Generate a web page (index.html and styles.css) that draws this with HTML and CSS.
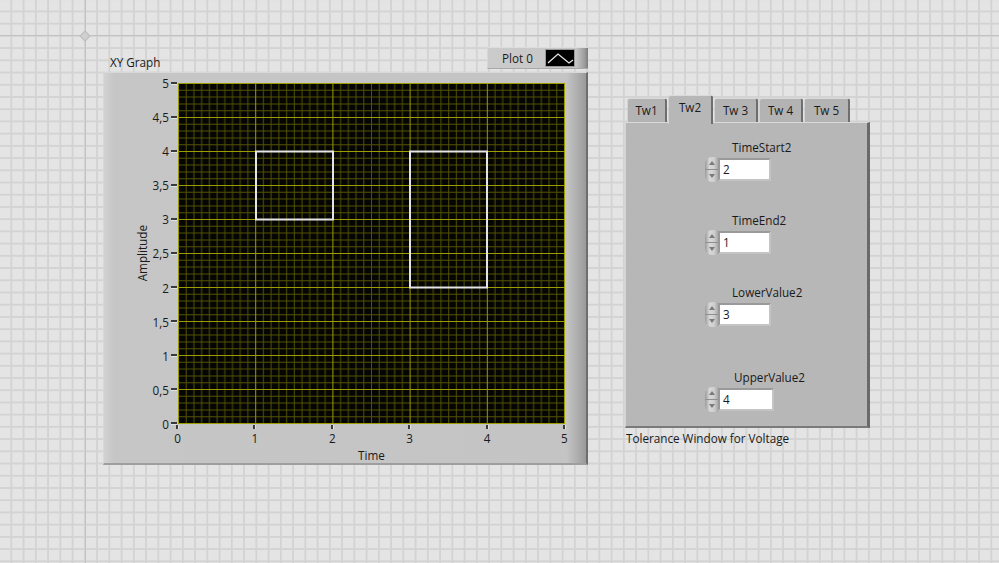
FILE: index.html
```html
<!DOCTYPE html>
<html lang="en">
<head>
<meta charset="utf-8">
<title>Front Panel</title>
<link rel="stylesheet" href="styles.css">
</head>
<body>
<div class="origin"></div>
<main class="front">
  <section class="graph">
    <div class="graph-head">
      <span class="caption graph-caption">XY Graph</span>
      <div class="legend">
        <span class="legend-name">Plot 0</span>
        <span class="legend-swatch">
          <svg width="28" height="16" viewBox="0 0 28 16"><polyline points="2,13 12,4 23,13 27,10" fill="none" stroke="#e8e8e8" stroke-width="1.3"/></svg>
        </span>
      </div>
    </div>
    <div class="frame">
      <div class="yaxis">
        <div class="ytitle">Amplitude</div>
        <div class="yticks">
          <div class="ytick"><span>5</span><i></i></div>
          <div class="ytick"><span>4,5</span><i></i></div>
          <div class="ytick"><span>4</span><i></i></div>
          <div class="ytick"><span>3,5</span><i></i></div>
          <div class="ytick"><span>3</span><i></i></div>
          <div class="ytick"><span>2,5</span><i></i></div>
          <div class="ytick"><span>2</span><i></i></div>
          <div class="ytick"><span>1,5</span><i></i></div>
          <div class="ytick"><span>1</span><i></i></div>
          <div class="ytick"><span>0,5</span><i></i></div>
          <div class="ytick"><span>0</span><i></i></div>
        </div>
      </div>
      <svg class="plot" width="387" height="341" viewBox="0 0 387 341">
        <defs>
          <pattern id="grid" patternUnits="userSpaceOnUse" width="77.2" height="34">
            <g stroke="#525200" stroke-width="1">
              <line x1="8.22" y1="0" x2="8.22" y2="34"/>
              <line x1="15.94" y1="0" x2="15.94" y2="34"/>
              <line x1="23.66" y1="0" x2="23.66" y2="34"/>
              <line x1="31.38" y1="0" x2="31.38" y2="34"/>
              <line x1="39.1" y1="0" x2="39.1" y2="34"/>
              <line x1="46.82" y1="0" x2="46.82" y2="34"/>
              <line x1="54.54" y1="0" x2="54.54" y2="34"/>
              <line x1="62.26" y1="0" x2="62.26" y2="34"/>
              <line x1="69.98" y1="0" x2="69.98" y2="34"/>
              <line x1="0" y1="7.3" x2="77.2" y2="7.3"/>
              <line x1="0" y1="14.1" x2="77.2" y2="14.1"/>
              <line x1="0" y1="20.9" x2="77.2" y2="20.9"/>
              <line x1="0" y1="27.7" x2="77.2" y2="27.7"/>
            </g>
            <g stroke="#9c9c00" stroke-width="1">
              <line x1="0.5" y1="0" x2="0.5" y2="34"/>
              <line x1="0" y1="0.5" x2="77.2" y2="0.5"/>
            </g>
          </pattern>
        </defs>
        <rect x="0" y="0" width="387" height="341" fill="#050505"/>
        <rect x="0" y="0" width="387" height="341" fill="url(#grid)"/>
        <line x1="386.5" y1="0" x2="386.5" y2="341" stroke="#9c9c00"/>
        <line x1="0" y1="340.5" x2="387" y2="340.5" stroke="#9c9c00"/>
        <rect x="78" y="68.5" width="77" height="68" fill="none" stroke="#e4e4e4" stroke-width="2"/>
        <rect x="232" y="68.5" width="77" height="136" fill="none" stroke="#e4e4e4" stroke-width="2"/>
      </svg>
      <div class="xaxis">
        <div class="xticks">
          <div class="xtick"><i></i><span>0</span></div>
          <div class="xtick"><i></i><span>1</span></div>
          <div class="xtick"><i></i><span>2</span></div>
          <div class="xtick"><i></i><span>3</span></div>
          <div class="xtick"><i></i><span>4</span></div>
          <div class="xtick"><i></i><span>5</span></div>
        </div>
        <div class="xtitle">Time</div>
      </div>
    </div>
  </section>

  <section class="tabctl">
    <div class="tabs">
      <div class="tab tab-1">Tw1</div>
      <div class="tab tab-2 is-active">Tw2</div>
      <div class="tab tab-3">Tw 3</div>
      <div class="tab tab-4">Tw 4</div>
      <div class="tab tab-5">Tw 5</div>
    </div>
    <div class="tabpanel">
      <div class="ctrl ctrl-first">
        <div class="ctrl-label">TimeStart2</div>
        <div class="numeric">
          <span class="spin"><b class="up"></b><b class="down"></b></span>
          <span class="numbox">2</span>
        </div>
      </div>
      <div class="ctrl ctrl-second">
        <div class="ctrl-label">TimeEnd2</div>
        <div class="numeric">
          <span class="spin"><b class="up"></b><b class="down"></b></span>
          <span class="numbox">1</span>
        </div>
      </div>
      <div class="ctrl ctrl-third">
        <div class="ctrl-label">LowerValue2</div>
        <div class="numeric">
          <span class="spin"><b class="up"></b><b class="down"></b></span>
          <span class="numbox">3</span>
        </div>
      </div>
      <div class="ctrl ctrl-fourth">
        <div class="ctrl-label ctrl-label-wide">UpperValue2</div>
        <div class="numeric">
          <span class="spin"><b class="up"></b><b class="down"></b></span>
          <span class="numbox numbox-wide">4</span>
        </div>
      </div>
    </div>
    <div class="caption tab-caption">Tolerance Window for Voltage</div>
  </section>
</main>
</body>
</html>
```

FILE: styles.css
```css
* { box-sizing: border-box; }

html, body {
  margin: 0;
  padding: 0;
  width: 999px;
  height: 563px;
  overflow: hidden;
}

body {
  font-family: "Open Sans", "Lato", sans-serif;
  font-size: 11.7px;
  color: #1a1a1a;
  background-color: #e4e4e4;
  background-image:
    linear-gradient(to right, transparent 85px, #c2c2c2 85px, #c2c2c2 86px, transparent 86px),
    linear-gradient(to bottom, transparent 35px, #c2c2c2 35px, #c2c2c2 36px, transparent 36px),
    linear-gradient(to right, #d3d3d3 2px, transparent 2px),
    linear-gradient(to bottom, #d3d3d3 2px, transparent 2px);
  background-size: 100% 100%, 100% 100%, 12.26px 12.23px, 12.26px 12.23px;
  background-position: 0 0, 0 0, 10.4px 0, 0 10.5px;
  background-repeat: no-repeat, no-repeat, repeat, repeat;
  position: relative;
}

.origin {
  position: absolute;
  left: 81px;
  top: 32px;
  width: 8px;
  height: 8px;
  background: #cfcfcf;
  border: 1px solid #bdbdbd;
  transform: rotate(45deg);
}

.front {
  display: flex;
  align-items: flex-start;
  gap: 37px;
  padding: 47px 0 0 103px;
}

.caption { line-height: 14px; white-space: nowrap; }

/* ---------- XY graph ---------- */
.graph { width: 485px; }

.graph-head {
  display: flex;
  justify-content: space-between;
  align-items: flex-start;
  height: 25px;
}

.graph-caption { margin: 8px 0 0 7px; }

.legend {
  display: flex;
  align-items: center;
  width: 101px;
  height: 22px;
  padding-left: 14px;
  background: linear-gradient(to right, #cbcbcb 0, #c6c6c6 88%, #9a9a9a 97%, #7a7a7a 100%);
  border-top: 1px solid #dcdcdc;
  border-left: 1px solid #d6d6d6;
  border-bottom: 1px solid #a8a8a8;
}

.legend-name { width: 43px; line-height: 14px; }

.legend-swatch {
  display: flex;
  width: 30px;
  height: 18px;
  background: #000;
  border: 1px solid #9a9a9a;
}

.frame {
  display: grid;
  grid-template-columns: 74px 387px;
  grid-template-rows: 341px auto;
  width: 485px;
  height: 393px;
  padding-top: 10px;
  background: linear-gradient(to right, #d2d2d2 0, #c6c6c6 10px, #c4c4c4 96%, #a6a6a6 99%, #9a9a9a 100%);
  border-top: 1px solid #d8d8d8;
  border-left: 1px solid #d8d8d8;
  border-right: 2px solid #6e6e6e;
  border-bottom: 2px solid #9e9e9e;
}

.yaxis {
  display: flex;
  padding-left: 31px;
}

.ytitle {
  width: 14px;
  line-height: 14px;
  writing-mode: vertical-rl;
  transform: rotate(180deg);
  text-align: center;
  align-self: center;
  white-space: nowrap;
}

.yticks {
  flex: 1;
  display: flex;
  flex-direction: column;
  justify-content: space-between;
  height: 355px;
  margin-top: -7px;
}

.ytick {
  display: flex;
  justify-content: flex-end;
  align-items: center;
  height: 14px;
  line-height: 14px;
}

.ytick i {
  display: block;
  width: 6px;
  height: 2px;
  margin: 0 1px 0 2px;
  background: #3a3a3a;
  border-bottom: 1px solid #e2e2e2;
  box-sizing: content-box;
}

.plot { display: block; }

.xaxis {
  grid-column: 2;
  display: flex;
  flex-direction: column;
  align-items: center;
}

.xticks {
  display: flex;
  justify-content: space-between;
  width: 407px;
  margin-left: -1px;
}

.xtick {
  display: flex;
  flex-direction: column;
  align-items: center;
  width: 20px;
}

.xtick i {
  display: block;
  width: 2px;
  height: 4px;
  margin-top: 1px;
  background: #3a3a3a;
  border-right: 1px solid #e2e2e2;
  box-sizing: content-box;
}

.xtick span { line-height: 14px; margin-top: 2px; }

.xtitle { line-height: 14px; margin-top: 3px; }

/* ---------- Tab control ---------- */
.tabctl {
  width: 245px;
  margin-top: 48px;
}

.tabs {
  display: flex;
  align-items: flex-end;
  gap: 1px;
  height: 27px;
  padding-left: 2px;
}

.tab {
  height: 24px;
  line-height: 22px;
  text-align: center;
  background: #b3b3b3;
  border-top: 1px solid #dadada;
  border-left: 1px solid #d2d2d2;
  border-right: 2px solid #6e6e6e;
  border-radius: 3px 3px 0 0;
}

.tab-1 { width: 40px; }
.tab-2 { width: 45px; }
.tab-3 { width: 44px; }
.tab-4 { width: 44px; }
.tab-5 { width: 46px; }

.tab.is-active {
  position: relative;
  z-index: 1;
  height: 29px;
  margin-bottom: -2px;
  line-height: 22px;
  background: #b7b7b7;
}

.tabpanel {
  width: 245px;
  height: 306px;
  padding-top: 17px;
  background: #b7b7b7;
  border-top: 1px solid #dadada;
  border-left: 1px solid #d4d4d4;
  border-right: 3px solid #6a6a6a;
  border-bottom: 2px solid #7a7a7a;
}

.ctrl-second { margin-top: 31px; }
.ctrl-third { margin-top: 30px; }
.ctrl-fourth { margin-top: 43px; }

.ctrl-label {
  line-height: 14px;
  margin-left: 106px;
}

.ctrl-label-wide { margin-left: 108px; }

.numeric {
  display: flex;
  align-items: center;
  margin: 3px 0 0 79px;
}

.spin {
  display: flex;
  flex-direction: column;
  width: 13px;
  height: 25px;
  border-radius: 7px 0 0 7px;
  background: linear-gradient(to right, #9a9a9a 0, #d8d8d8 35%, #cfcfcf 70%, #a8a8a8 100%);
  overflow: hidden;
}

.spin b {
  flex: 1;
  display: flex;
  align-items: center;
  justify-content: center;
}

.spin .up { border-bottom: 1px solid #8f8f8f; }

.spin .up::before {
  content: "";
  border-left: 3px solid transparent;
  border-right: 3px solid transparent;
  border-bottom: 4px solid #7a7a7a;
}

.spin .down::before {
  content: "";
  border-left: 3px solid transparent;
  border-right: 3px solid transparent;
  border-top: 4px solid #7a7a7a;
}

.numbox {
  width: 53px;
  height: 23px;
  padding-left: 3px;
  line-height: 19px;
  background: #fff;
  border: 2px solid #a4a4a4;
  border-top-color: #9a9a9a;
  border-left-color: #9a9a9a;
  border-right-color: #c4c4c4;
  border-bottom-color: #c4c4c4;
}

.numbox-wide { width: 56px; }

.tab-caption { margin: 3px 0 0 1px; }
```
